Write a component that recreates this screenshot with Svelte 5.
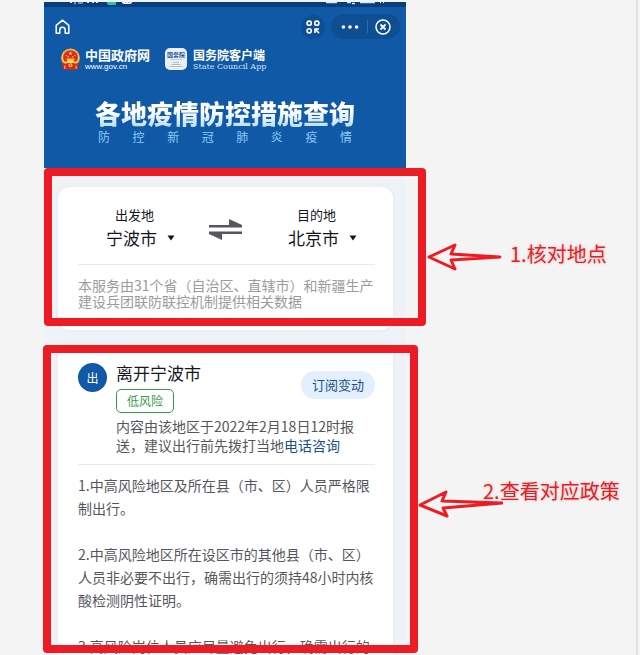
<script lang="ts">
  let from = $state('宁波市');
  let to = $state('北京市');

  const cities = ['宁波市', '北京市', '上海市', '杭州市'];

  function swap() {
    [from, to] = [to, from];
  }
</script>

<main class="page">
  <div class="phone">
    <header class="hero">
      <div class="status" aria-hidden="true">
        <svg width="46" height="3" viewBox="0 0 46 3">
          <path d="M0 0.5h2M5 0v2.5M8 1h5M17 0.5h2M22 0.5h2M26 0.5h2" stroke="#d9e4f0" stroke-width="1" />
          <rect x="37" y="-4" width="10" height="7" rx="2" fill="#25c993" />
        </svg>
        <svg class="status-app" width="10" height="3" viewBox="0 0 10 3">
          <rect y="-4" width="10" height="6" rx="2" fill="#f2f2ea" />
          <path d="M3 0h1M6 0h2" stroke="#6b6b55" />
        </svg>
        <svg width="60" height="3" viewBox="0 0 60 3">
          <path d="M0 0.5h11M21 0.5h4M26 1.5h3M34 0.5h15M54 0.5h1M57 0.5h1" stroke="#d9e4f0" stroke-width="1.4" />
        </svg>
      </div>

      <nav class="topbar">
        <button class="icon-btn home" aria-label="首页">
          <svg width="15" height="16" viewBox="0 0 15 16" fill="none" stroke="#fff" stroke-width="1.5" stroke-linejoin="round">
            <path d="M1.2 6.4 7.5 1.2l6.3 5.2v7.9h-3.6V11a2.7 2.7 0 0 0-5.4 0v3.3H1.2z" />
          </svg>
        </button>
        <button class="icon-btn round" aria-label="小程序">
          <svg width="14" height="14" viewBox="0 0 14 14" fill="none" stroke="#fff" stroke-width="1.6">
            <circle cx="3.2" cy="3.2" r="2.1" />
            <circle cx="10.8" cy="3.2" r="2.1" />
            <circle cx="3.2" cy="10.8" r="2.1" />
            <path d="M9 13V9h4M9.2 9.2l3.9 3.9" />
          </svg>
        </button>
        <div class="capsule">
          <button class="icon-btn" aria-label="更多">
            <svg width="18" height="4" viewBox="0 0 18 4" fill="#fff">
              <circle cx="2.4" cy="2" r="1.8" />
              <circle cx="9" cy="2" r="1.8" />
              <circle cx="15.6" cy="2" r="1.8" />
            </svg>
          </button>
          <span class="capsule-line"></span>
          <button class="icon-btn" aria-label="关闭">
            <svg width="16" height="16" viewBox="0 0 16 16" fill="none" stroke="#fff">
              <circle cx="8" cy="8" r="7" stroke-width="1.5" />
              <path d="m5.5 5.5 5 5m0-5-5 5" stroke-width="1.8" />
            </svg>
          </button>
        </div>
      </nav>

      <div class="brands">
        <div class="brand">
          <svg width="21" height="22" viewBox="0 0 21 22">
            <circle cx="10.5" cy="9.8" r="9.4" fill="#f0bd4b" />
            <circle cx="10.5" cy="9.5" r="7.3" fill="#dc2a1c" />
            <path d="m10.5 3.2.6 1.5h1.6l-1.3 1 .5 1.5-1.4-.9-1.4.9.5-1.5-1.3-1h1.6z" fill="#f9d75c" />
            <g fill="#f9d75c">
              <circle cx="6.3" cy="7.6" r=".7" />
              <circle cx="8.2" cy="8.8" r=".7" />
              <circle cx="12.8" cy="8.8" r=".7" />
              <circle cx="14.7" cy="7.6" r=".7" />
              <path d="M7 10.5h7l1 1.2H6zM7.2 12h6.6v1.4H7.2zM4.4 13.6h12.2v1.5H4.4z" />
            </g>
            <path d="M2 14.5c2.5 1 4.5 1.7 8.5 1.7s6-.7 8.5-1.7l-1.2 6.2c-2 .9-4.5 1.1-7.3 1.1s-5.3-.2-7.3-1.1z" fill="#d8261b" />
            <circle cx="10.5" cy="17.3" r="2" fill="#f0bd4b" />
            <circle cx="10.5" cy="17.3" r=".8" fill="#d8261b" />
            <path d="M5 17.5 4.7 21M16 17.5l.3 3.5" stroke="#f0bd4b" stroke-width="1.1" />
          </svg>
          <div class="brand-text">
            <strong class="gov">中国政府网</strong>
            <span class="url">www.gov.cn</span>
          </div>
        </div>
        <div class="brand council">
          <div class="app-icon">
            <b>国务院</b>
            <svg width="16" height="9" viewBox="0 0 16 9" stroke="#9fb0c4" fill="none">
              <path d="M2 .5h12" stroke-width=".5" />
              <path d="M5 3.5h6M3.5 5.5h9M1.5 7.5h13" stroke-width=".8" />
            </svg>
          </div>
          <div class="brand-text">
            <strong>国务院客户端</strong>
            <span class="council-en">State Council App</span>
          </div>
        </div>
      </div>

      <div class="headline">
        <h1>各地疫情防控措施查询</h1>
        <p>防控新冠肺炎疫情</p>
      </div>
    </header>

    <!-- Step 1: departure and destination -->
    <section class="step step-route">
      <div class="card">
        <div class="route">
          <div class="place">
            <label for="from">出发地</label>
            <div class="picker">
              <select id="from" bind:value={from}>
                {#each cities as city}
                  <option>{city}</option>
                {/each}
              </select>
              <svg width="8" height="6" viewBox="0 0 8 6"><path d="M.5.5h7L4 5.5z" fill="#14161f" /></svg>
            </div>
          </div>
          <button class="icon-btn swap" aria-label="交换" onclick={swap}>
            <svg width="35" height="24" viewBox="0 0 35 24">
              <path d="M1 7h20V1l13 6v2.500H1z" fill="#57565f" />
              <path d="M34 13.500H1V16l13 6v-6h20z" fill="#57565f" />
            </svg>
          </button>
          <div class="place">
            <label for="to">目的地</label>
            <div class="picker">
              <select id="to" bind:value={to}>
                {#each cities as city}
                  <option>{city}</option>
                {/each}
              </select>
              <svg width="8" height="6" viewBox="0 0 8 6"><path d="M.5.5h7L4 5.5z" fill="#14161f" /></svg>
            </div>
          </div>
        </div>
        <p class="source">本服务由31个省（自治区、直辖市）和新疆生产<br />建设兵团联防联控机制提供相关数据</p>
      </div>

      <div class="mark"></div>
      <div class="note">
        <svg width="76" height="30" viewBox="0 0 76 30">
          <path d="M3 16 29 4l-4 9 49 3-49 3 4 9z" />
        </svg>
        <span>1.核对地点</span>
      </div>
    </section>

    <!-- Step 2: policy for the chosen city -->
    <section class="step step-policy">
      <article class="card">
        <div class="city">
          <span class="avatar">出</span>
          <div class="city-info">
            <div class="city-head">
              <div>
                <h2>离开{from}</h2>
                <span class="risk">低风险</span>
              </div>
              <button class="subscribe">订阅变动</button>
            </div>
            <p class="report">内容由该地区于2022年2月18日12时报<br />送，建议出行前先拨打当地<a href="#phone">电话咨询</a></p>
          </div>
        </div>
        <div class="policy">
          <p>1.中高风险地区及所在县（市、区）人员严格限制出行。</p>
          <p>2.中高风险地区所在设区市的其他县（市、区）人员非必要不出行，确需出行的须持48小时内核酸检测阴性证明。</p>
          <p>3.高风险岗位人员应尽量避免出行，确需出行的</p>
        </div>
      </article>

      <div class="mark"></div>
      <div class="note">
        <svg width="86" height="30" viewBox="0 0 86 30">
          <path d="M3 16 29 3l-4 9 60 2-59 5 4 8z" />
        </svg>
        <span>2.查看对应政策</span>
      </div>
    </section>
  </div>
</main>

<style>
  :global(body) {
    margin: 0;
    background: #f4f4f4;
  }

  .page {
    box-sizing: border-box;
    height: 100vh;
    margin-right: 2px;
    padding: 2px 230px 0 44px;
    border-right: 2px solid #e2e2e2;
    overflow: hidden;
    font-family: 'Noto Sans CJK SC', 'Noto Sans', sans-serif;
    color: #14161f;
  }

  .phone {
    display: flex;
    flex-direction: column;
    height: 100%;
    background: #eff2f7;
  }

  h1,
  h2,
  p {
    margin: 0;
  }

  button {
    padding: 0;
    border: 0;
    background: none;
    font-family: inherit;
    cursor: pointer;
  }

  .icon-btn {
    display: flex;
    align-items: center;
    justify-content: center;
  }

  /* Blue header */
  .hero {
    flex: none;
    height: 166px;
    background: #1059a6;
    color: #fff;
  }

  .status {
    display: flex;
    height: 5px;
    padding: 0 20px 0 26px;
    background: #083e79;
  }

  .status svg:last-child {
    margin-left: auto;
  }

  .status-app {
    margin-left: 6px;
  }

  .topbar {
    display: flex;
    align-items: center;
    padding: 7px 6px 0 11px;
  }

  .home {
    margin-right: auto;
  }

  .round {
    width: 24px;
    height: 24px;
    border-radius: 50%;
    background: #0e4f94;
  }

  .capsule {
    display: flex;
    align-items: center;
    justify-content: space-between;
    box-sizing: border-box;
    width: 69px;
    height: 25px;
    margin-left: 6px;
    padding: 0 9px 0 10px;
    border-radius: 13px;
    background: #0e4f94;
  }

  .capsule-line {
    width: 1px;
    height: 13px;
    background: #2a6db4;
  }

  .brands {
    display: flex;
    gap: 15px;
    padding: 8px 16px 0;
  }

  .brand {
    display: flex;
    align-items: center;
    gap: 4px;
  }

  .brand-text {
    display: flex;
    flex-direction: column;
    gap: 1px;
    font-size: 13px;
    line-height: 15px;
    white-space: nowrap;
  }

  .council {
    gap: 6px;
  }

  .council .brand-text {
    font-size: 12px;
  }

  .url {
    font: 8px/8px 'Liberation Sans', sans-serif;
  }

  .council-en {
    font: 8px/8px 'DejaVu Serif', serif;
    color: #d5e3f2;
  }

  .app-icon {
    display: flex;
    flex-direction: column;
    align-items: center;
    justify-content: center;
    width: 22px;
    height: 22px;
    border-radius: 5px;
    background: #e9eff5;
    color: #1b5795;
  }

  .app-icon b {
    font-size: 6px;
    line-height: 8px;
  }

  .headline {
    display: flex;
    flex-direction: column;
    align-items: center;
    padding-top: 25px;
  }

  h1 {
    font-size: 26px;
    line-height: 34px;
    font-weight: 900;
    white-space: nowrap;
    background: linear-gradient(#fff 45%, #c3e2fa 85%);
    background-clip: text;
    color: transparent;
  }

  .headline p {
    width: 254px;
    font-size: 12px;
    line-height: 14px;
    color: #8ecbf3;
    text-align-last: justify;
  }

  /* Sections with their marker frames */
  .step {
    position: relative;
    padding: 0 13px 0 14px;
  }

  .card {
    box-sizing: border-box;
    padding: 16px 18px 21px 20px;
    background: #fff;
    box-shadow: 0 0 4px rgba(60, 80, 120, 0.06);
  }

  .step-route {
    padding-top: 19px;
  }

  .step-route .card {
    border-radius: 12px;
  }

  .route {
    display: flex;
    justify-content: space-between;
    align-items: flex-end;
    padding: 0 18px 15px 28px;
    border-bottom: 1px solid #e9e9ec;
  }

  .place label {
    display: block;
    padding-right: 12px;
    font-size: 13px;
    line-height: 24px;
    text-align: center;
  }

  .picker {
    display: flex;
    align-items: center;
  }

  .picker svg {
    margin-left: -8px;
    pointer-events: none;
  }

  select {
    width: 69px;
    height: 22px;
    padding: 0;
    border: 0;
    appearance: none;
    background: none;
    font: 17px/22px 'Noto Sans CJK SC', sans-serif;
    color: inherit;
  }

  .swap {
    margin: 0 12px 7px 0;
  }

  .source {
    padding-top: 12px;
    font-size: 14px;
    line-height: 16px;
    color: #9b9b9b;
    white-space: nowrap;
  }

  .step-policy {
    flex: 1;
    min-height: 0;
    margin-top: 15px;
  }

  .step-policy .card {
    height: 100%;
    overflow: hidden;
  }

  .city {
    display: flex;
    gap: 9px;
    padding-bottom: 9px;
    border-bottom: 1px solid #e9e9ec;
  }

  .avatar {
    flex: none;
    width: 29px;
    height: 29px;
    margin-top: 2px;
    border-radius: 50%;
    background: #1059a6;
    color: #fff;
    font-size: 12px;
    line-height: 29px;
    text-align: center;
  }

  .city-info {
    flex: 1;
  }

  .city-head {
    display: flex;
    justify-content: space-between;
    align-items: flex-start;
    padding-bottom: 4px;
  }

  h2 {
    font-size: 17px;
    line-height: 24px;
    font-weight: 400;
    padding-bottom: 4px;
  }

  .risk {
    display: block;
    box-sizing: border-box;
    width: 58px;
    border: 1px solid #3b9a48;
    border-radius: 5px;
    color: #3b9a48;
    font-size: 12px;
    line-height: 22px;
    text-align: center;
  }

  .subscribe {
    margin-top: 10px;
    padding: 0 11px;
    border-radius: 14px;
    background: #e1efff;
    color: #1d5088;
    font-size: 13px;
    line-height: 28px;
  }

  .report {
    font-size: 14px;
    line-height: 19px;
    color: #55565c;
    white-space: nowrap;
  }

  .report a {
    color: #17528f;
    text-decoration: none;
  }

  .policy {
    padding-top: 9px;
    font-size: 14px;
    line-height: 23px;
    color: #55565c;
  }

  .policy p {
    margin-bottom: 23px;
  }

  .mark {
    position: absolute;
    inset: 0 -20px 4px 0;
    border: 8px solid #ed1c24;
    border-radius: 4px;
    pointer-events: none;
  }

  .step-policy .mark {
    inset: 0 -12px 2px -1px;
  }

  .note {
    position: absolute;
    top: 73px;
    left: calc(100% + 20px);
    display: flex;
    gap: 8px;
    font-size: 20px;
    line-height: 26px;
    color: #ed1c24;
    white-space: nowrap;
    text-shadow: 0 0 3px #bbb;
  }

  .note path {
    fill: none;
    stroke: #ed1c24;
    stroke-width: 3;
    stroke-linejoin: round;
  }

  /* The second arrow runs under the start of its text */
  .step-policy .note {
    top: 144px;
    left: calc(100% + 11px);
    gap: 0;
  }

  .step-policy .note span {
    margin: -11px 0 0 -20px;
  }
</style>
